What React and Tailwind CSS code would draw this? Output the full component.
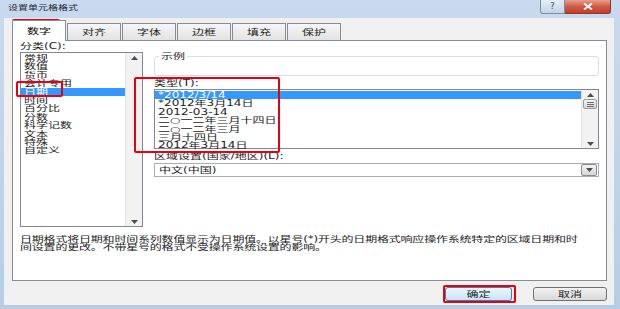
import React from 'react';

const FONT = { fontFamily: '"DejaVu Sans", "Noto Sans CJK SC", sans-serif' };

// squash glyphs vertically like the reference (screenshot was compressed in height)
const T = ({ children }) => <span className="inline-block scale-y-[0.66]">{children}</span>;

const Up = () => (
  <svg width="7" height="4" viewBox="0 0 7 4"><polygon points="0,4 3.5,0 7,4" fill="#4d4d4d" /></svg>
);
const Down = () => (
  <svg width="7" height="4" viewBox="0 0 7 4"><polygon points="0,0 7,0 3.5,4" fill="#4d4d4d" /></svg>
);

const Row = ({ children, sel }) => (
  <div className={`h-[8.4px] leading-[8.4px] pl-[3px] whitespace-nowrap ${sel ? 'bg-[#3399ff] text-white' : 'text-[#1b1b1b]'}`}>
    <T>{children}</T>
  </div>
);

const Tab = ({ label, active }) => (
  <div
    className={
      active
        ? 'relative z-10 w-[54px] h-[21px] border border-b-0 border-[#898c95] bg-white flex items-center justify-center leading-[12px]'
        : 'w-[54px] h-[18px] border border-[#898c95] bg-gradient-to-b from-[#f6f6f6] to-[#e3e3e3] flex items-center justify-center leading-[12px] text-[#222]'
    }
  >
    <T>{label}</T>
  </div>
);

const Scrollbar = ({ thumb }) => (
  <div className="w-[17px] h-full flex flex-col bg-[#f2f2f2] border-l border-[#e3e3e3]">
    <div className="h-[9px] flex items-center justify-center">
      <Up />
    </div>
    {thumb && (
      <div className="mx-[1px] h-[10px] border border-[#9a9a9a] rounded-[2px] bg-gradient-to-b from-[#f4f4f4] to-[#d8d8d8] flex flex-col items-center justify-center gap-[1px]">
        <div className="w-[7px] h-px bg-[#6b6b6b]" />
        <div className="w-[7px] h-px bg-[#6b6b6b]" />
        <div className="w-[7px] h-px bg-[#6b6b6b]" />
      </div>
    )}
    <div className="flex-1" />
    <div className="h-[9px] flex items-center justify-center">
      <Down />
    </div>
  </div>
);

const RedBox = ({ className }) => (
  <div className={`absolute border-2 border-[#e60012] rounded-[2px] pointer-events-none ${className}`} />
);

export default function App() {
  const cats = ['常规', '数值', '货币', '会计专用', '日期', '时间', '百分比', '分数', '科学记数', '文本', '特殊', '自定义'];
  const types = ['*2012/3/14', '*2012年3月14日', '2012-03-14', '二○一二年三月十四日', '二○一二年三月', '三月十四日', '2012年3月14日'];
  const tabs = ['数字', '对齐', '字体', '边框', '填充', '保护'];

  return (
    <div className="relative w-[620px] h-[309px] overflow-hidden bg-gradient-to-b from-[#c9daee] to-[#b7cde6] flex flex-col text-[12px]" style={FONT}>
      {/* title bar */}
      <div className="h-[18px] flex items-start justify-between shrink-0">
        <div className="pl-[8px] pt-[3px] text-[10px] leading-[10px] text-[#1e2a3a]">
          <T>设置单元格格式</T>
        </div>
        <div className="flex mr-[9px]">
          <div className="w-[25px] h-[14px] border border-[#7b8ea7] border-t-0 rounded-bl-[3px] bg-gradient-to-b from-[#e6eef8] to-[#c3d3e6] flex items-center justify-center text-[9px] leading-[9px] text-[#3b4d66]">
            ?
          </div>
          <div className="w-[46px] h-[14px] border border-[#8a3a33] border-t-0 border-l-0 rounded-br-[3px] bg-gradient-to-b from-[#e6a08f] via-[#d05a45] to-[#c23c2a] flex items-center justify-center">
            <svg width="10" height="7" viewBox="0 0 10 7">
              <path d="M1 0.5 L9 6.5 M9 0.5 L1 6.5" stroke="#fff" strokeWidth="1.8" />
            </svg>
          </div>
        </div>
      </div>

      {/* dialog body */}
      <div className="ml-[4px] mr-[6px] mb-[4px] flex-1 bg-[#f0f0f0] flex flex-col pl-[8px] pr-[7px] pt-[2px]">
        <div className="h-[21px] flex items-end gap-px shrink-0">
          {tabs.map((t, i) => (
            <Tab key={t} label={t} active={i === 0} />
          ))}
        </div>

        <div className="-mt-px h-[241px] shrink-0 border border-[#898c95] bg-white flex flex-col px-[7px]">
          <div className="flex gap-[11px]">
            {/* category */}
            <div className="w-[123px] shrink-0 flex flex-col">
              <div className="h-[11px] leading-[11px] text-[#1b1b1b]">
                <T>分类(C):</T>
              </div>
              <div className="h-[175px] border border-[#828790] flex bg-white">
                <div className="flex-1 pt-px">
                  {cats.map((c) => (
                    <Row key={c} sel={c === '日期'}>{c}</Row>
                  ))}
                </div>
                <Scrollbar />
              </div>
            </div>

            {/* right side */}
            <div className="flex-1 flex flex-col">
              <fieldset className="mt-[9px] h-[26px] border border-[#d5dfe5] rounded-[3px]">
                <legend className="ml-[4px] px-[2px] text-[12px] leading-[12px] text-[#1b1b1b]">
                  <T>示例</T>
                </legend>
              </fieldset>
              <div className="mt-[2px] h-[11px] leading-[11px] text-[#1b1b1b]">
                <T>类型(T):</T>
              </div>
              <div className="h-[60px] border border-[#828790] flex bg-white">
                <div className="flex-1 pt-px">
                  {types.map((t, i) => (
                    <Row key={t} sel={i === 0}>{t}</Row>
                  ))}
                </div>
                <Scrollbar thumb />
              </div>
              <div className="mt-[2px] h-[11px] leading-[11px] text-[#1b1b1b]">
                <T>区域设置(国家/地区)(L):</T>
              </div>
              <div className="mt-px h-[14px] border border-[#abadb3] bg-white flex items-center">
                <div className="flex-1 pl-[4px] leading-[12px] text-[#1b1b1b]">
                  <T>中文(中国)</T>
                </div>
                <div className="w-[16px] h-[12px] mr-px border border-[#8a8a8a] rounded-[2px] bg-gradient-to-b from-[#f3f3f3] to-[#d6d6d6] flex items-center justify-center">
                  <Down />
                </div>
              </div>
            </div>
          </div>

          <div className="mt-[8px] leading-[8.4px] tracking-[-0.2px] text-[#1b1b1b] whitespace-nowrap">
            <div><T>日期格式将日期和时间系列数值显示为日期值。以星号(*)开头的日期格式响应操作系统特定的区域日期和时</T></div>
            <div><T>间设置的更改。不带星号的格式不受操作系统设置的影响。</T></div>
          </div>
        </div>

        {/* buttons */}
        <div className="flex-1 flex justify-end items-start pt-[6px] gap-[21px]">
          <div className="w-[67px] h-[14px] border border-[#3c7fb1] rounded-[3px] bg-gradient-to-b from-[#eaf6fd] to-[#c8e4f6] flex items-center justify-center leading-[12px] text-[#1b1b1b]">
            <T>确定</T>
          </div>
          <div className="w-[74px] h-[14px] border border-[#707070] rounded-[3px] bg-gradient-to-b from-[#f2f2f2] to-[#d9d9d9] flex items-center justify-center leading-[12px] text-[#1b1b1b]">
            <T>取消</T>
          </div>
        </div>
      </div>

      {/* red annotation boxes */}
      <RedBox className="left-[12px] top-[19px] w-[48px] h-[17px]" />
      <RedBox className="left-[16px] top-[81px] w-[47px] h-[16px]" />
      <RedBox className="left-[134px] top-[77px] w-[146px] h-[76px]" />
      <RedBox className="left-[443px] top-[285px] w-[73px] h-[18px]" />
    </div>
  );
}
